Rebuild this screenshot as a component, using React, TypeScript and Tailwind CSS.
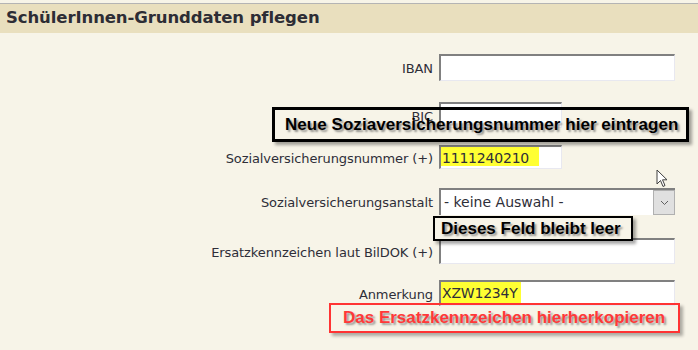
import React from "react";

const labelFont = { fontFamily: '"DejaVu Sans", Verdana, sans-serif' };

function Row({
  label,
  children,
  className,
}: {
  label: string;
  children: React.ReactNode;
  className?: string;
}) {
  return (
    <div className={"flex items-center " + (className ?? "")}>
      <div className="w-[433px] text-right text-[13px] text-[#2e2e38] tracking-[-0.1px] pt-[3px]">
        {label}
      </div>
      <div className="ml-[6px]">{children}</div>
    </div>
  );
}

function Input({
  w,
  h,
  value,
  hl,
}: {
  w: number;
  h: number;
  value?: string;
  hl?: number;
}) {
  return (
    <div
      className="bg-white border-t-2 border-l-2 border-t-[#808080] border-l-[#808080] border-r border-b border-r-[#e8e8f0] border-b-[#e8e8f0] flex items-stretch text-[14px] text-[#2e2e38]"
      style={{ width: w, height: h }}
    >
      {value ? (
        <div
          className="bg-[#ffff33] px-[1px] pt-[1px] mb-[2px] tracking-[-0.2px]"
          style={{ width: hl }}
        >
          {value}
        </div>
      ) : null}
    </div>
  );
}

const calloutFont = '"Liberation Sans", Arial, sans-serif';

export default function App() {
  return (
    <div
      className="relative w-[698px] h-[350px] bg-[#f7f4e8] overflow-hidden"
      style={labelFont}
    >
      <div className="h-[3px]" />
      <div className="h-[1px] bg-[#b4b4b4]" />
      <div className="h-[29px] bg-[#e9dfbe] pl-[6px] flex items-center">
        <span className="text-[16.5px] font-bold text-[#2d2d35] tracking-[-0.1px]">
          SchülerInnen-Grunddaten pflegen
        </span>
      </div>

      <Row label="IBAN" className="mt-[21px]">
        <Input w={236} h={27} />
      </Row>
      <Row label="BIC" className="mt-[21px]">
        <Input w={123} h={26} />
      </Row>
      <Row label="Sozialversicherungsnummer (+)" className="mt-[17px]">
        <Input w={123} h={24} value="1111240210" hl={98} />
      </Row>
      <Row label="Sozialversicherungsanstalt" className="mt-[19px]">
        <div className="w-[236px] h-[27px] bg-white border-t-2 border-l-2 border-t-[#808080] border-l-[#808080] flex items-stretch text-[14px] text-[#2e2e38]">
          <div className="flex-1 pl-[3px] pt-[2px]">- keine Auswahl -</div>
          <div className="w-[22px] bg-[#e0e0e0] border border-[#b0b0b0] flex items-center justify-center">
            <svg width="9" height="6" viewBox="0 0 9 6">
              <path d="M1 1 L4.5 4.5 L8 1" fill="none" stroke="#606060" strokeWidth="1" />
            </svg>
          </div>
        </div>
      </Row>
      <Row label="Ersatzkennzeichen laut BilDOK (+)" className="mt-[23px]">
        <Input w={236} h={26} />
      </Row>
      <Row label="Anmerkung" className="mt-[16px]">
        <Input w={236} h={26} value="XZW1234Y" hl={80} />
      </Row>

      {/* Callout 1 */}
      <div className="absolute left-[272px] top-[107px] w-[417px] h-[35px] border-[3px] border-black shadow-[3px_3px_3px_rgba(0,0,0,0.35)] flex items-center pl-[10px]">
        <span
          className="text-[17px] font-bold text-black tracking-[0.05px]"
          style={{
            fontFamily: calloutFont,
            textShadow: "2px 2px 2px rgba(80,80,80,0.6)",
          }}
        >
          Neue Soziaversicherungsnummer hier eintragen
        </span>
      </div>

      {/* Callout 2 */}
      <div className="absolute left-[433px] top-[216px] w-[200px] h-[25px] border-[2px] border-black bg-[#f7f4e8] shadow-[3px_3px_3px_rgba(0,0,0,0.35)] flex items-center pl-[6px]">
        <span
          className="text-[17px] font-bold text-black"
          style={{
            fontFamily: calloutFont,
            textShadow: "2px 2px 2px rgba(80,80,80,0.6)",
          }}
        >
          Dieses Feld bleibt leer
        </span>
      </div>

      {/* Callout 3 */}
      <div className="absolute left-[329px] top-[303px] w-[351px] h-[30px] border-[2px] border-[#ff3333] shadow-[3px_3px_3px_rgba(0,0,0,0.3)] flex items-center pl-[12px]">
        <span
          className="text-[17px] font-bold text-[#ff3838]"
          style={{
            fontFamily: calloutFont,
            textShadow: "2px 2px 2px rgba(80,80,80,0.55)",
          }}
        >
          Das Ersatzkennzeichen hierherkopieren
        </span>
      </div>

      {/* Cursor */}
      <svg
        className="absolute left-[656px] top-[169px]"
        width="14"
        height="20"
        viewBox="0 0 14 20"
      >
        <path
          d="M1 1 L1 15 L4.5 11.5 L7 17.5 L9 16.5 L6.5 10.8 L11 10.8 Z"
          fill="white"
          stroke="#404040"
          strokeWidth="1"
          strokeLinejoin="miter"
        />
      </svg>
    </div>
  );
}
